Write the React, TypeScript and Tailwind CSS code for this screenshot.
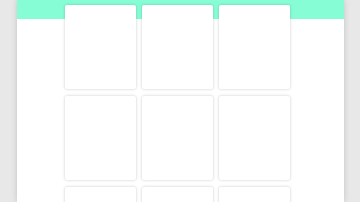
import React from "react";

const cards = Array.from({ length: 9 }, (_, i) => i);

const App: React.FC = () => {
  return (
    <div className="h-[202px] w-[360px] overflow-hidden bg-[#e8e8e8] font-['Liberation_Sans',sans-serif]">
      <div className="relative ml-[17px] h-[202px] w-[327px] bg-white shadow-[0_0_6px_rgba(0,0,0,0.16)]">
        <div className="h-[19px] bg-[#86fdd4]" />
        <div className="absolute left-[48px] top-[5px] grid grid-cols-[71px_71px_71px] gap-x-[6px] gap-y-[7px]">
          {cards.map((i) => (
            <div
              key={i}
              className="h-[84px] rounded-[2px] bg-white shadow-[0_0_3px_rgba(0,0,0,0.22)]"
            />
          ))}
        </div>
      </div>
    </div>
  );
};

export default App;
